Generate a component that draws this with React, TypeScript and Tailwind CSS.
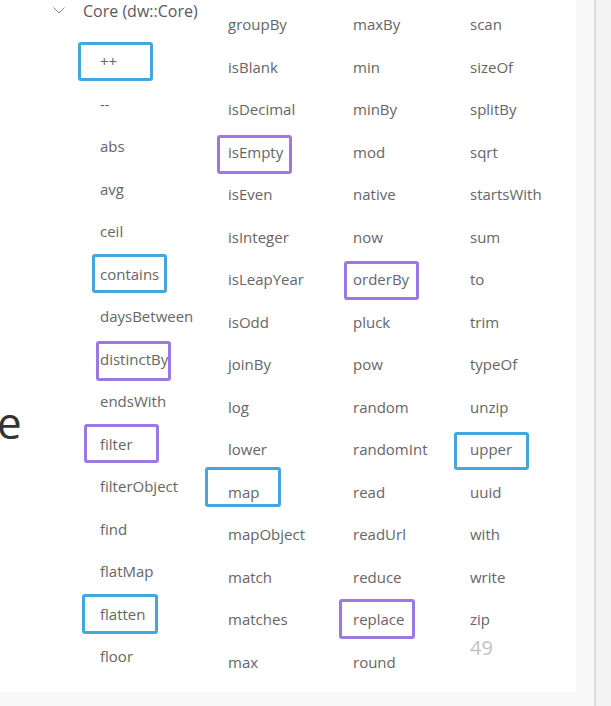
import React from 'react'

const columns: string[][] = [
  ['++', '--', 'abs', 'avg', 'ceil', 'contains', 'daysBetween', 'distinctBy', 'endsWith', 'filter', 'filterObject', 'find', 'flatMap', 'flatten', 'floor'],
  ['groupBy', 'isBlank', 'isDecimal', 'isEmpty', 'isEven', 'isInteger', 'isLeapYear', 'isOdd', 'joinBy', 'log', 'lower', 'map', 'mapObject', 'match', 'matches', 'max'],
  ['maxBy', 'min', 'minBy', 'mod', 'native', 'now', 'orderBy', 'pluck', 'pow', 'random', 'randomInt', 'read', 'readUrl', 'reduce', 'replace', 'round'],
  ['scan', 'sizeOf', 'splitBy', 'sqrt', 'startsWith', 'sum', 'to', 'trim', 'typeOf', 'unzip', 'upper', 'uuid', 'with', 'write', 'zip'],
]

// annotation boxes drawn over the list
const marks = [
  { left: 78, top: 42, w: 75, h: 39, color: 'blue' },
  { left: 217, top: 135, w: 75, h: 39, color: 'purple' },
  { left: 92, top: 254, w: 75, h: 39, color: 'blue' },
  { left: 96, top: 341, w: 75, h: 40, color: 'purple' },
  { left: 84, top: 424, w: 75, h: 39, color: 'purple' },
  { left: 205, top: 467, w: 76, h: 40, color: 'blue' },
  { left: 82, top: 594, w: 76, h: 40, color: 'blue' },
  { left: 344, top: 261, w: 75, h: 39, color: 'purple' },
  { left: 454, top: 432, w: 75, h: 38, color: 'blue' },
  { left: 339, top: 599, w: 76, h: 40, color: 'purple' },
]

function Item({ name }: { name: string }) {
  return <div className="h-[42.5px] leading-[42.5px] whitespace-nowrap">{name}</div>
}

export default function App() {
  return (
    <div className="flex h-[706px] w-[611px] overflow-hidden bg-[#f9f9f9] font-['Open_Sans',sans-serif]">
      <div className="relative h-[692px] w-[576px] shrink-0 overflow-hidden bg-white">
        {/* tail of a heading that runs off the left edge */}
        <span className="absolute left-[-3px] top-[400px] text-[44px] leading-none text-[#333]">e</span>

        <div className="grid grid-cols-[128px_125px_117px_1fr] pl-[100px] pt-[3px] text-[15px] text-[#666]">
          <div className="flex flex-col">
            <div className="-ml-[47px] flex h-[37px] items-start">
              <div className="flex h-[16px] items-center gap-[18px] text-[16px] leading-[16px] text-[#5a5a5a]">
                <svg width="12" height="7" viewBox="0 0 12 7" className="mt-[-1px]">
                  <path d="M0.5 0.5 L6 6 L11.5 0.5" fill="none" stroke="#888" strokeWidth="1" />
                </svg>
                <span className="whitespace-nowrap">Core (dw::Core)</span>
              </div>
            </div>
            {columns[0].map(n => <Item key={n} name={n} />)}
          </div>
          {columns.slice(1).map((col, i) => (
            <div key={i} className="flex flex-col">
              {col.map(n => <Item key={n} name={n} />)}
              {i === 2 && <div className="mt-[-3px] text-[20px] leading-none text-[#c2c2c2]">49</div>}
            </div>
          ))}
        </div>

        {marks.map((m, i) => (
          <div
            key={i}
            className={
              'absolute rounded-[3px] border-[3px] ' +
              (m.color === 'blue' ? 'border-[#44a6da]' : 'border-[#9b79e0]')
            }
            style={{ left: m.left, top: m.top, width: m.w, height: m.h }}
          />
        ))}
      </div>
      <div className="w-[18px] shrink-0" />
      <div className="w-[2px] shrink-0 bg-[#dcdcdc]" />
      <div className="flex-1 bg-[#f3f3f3]" />
    </div>
  )
}
